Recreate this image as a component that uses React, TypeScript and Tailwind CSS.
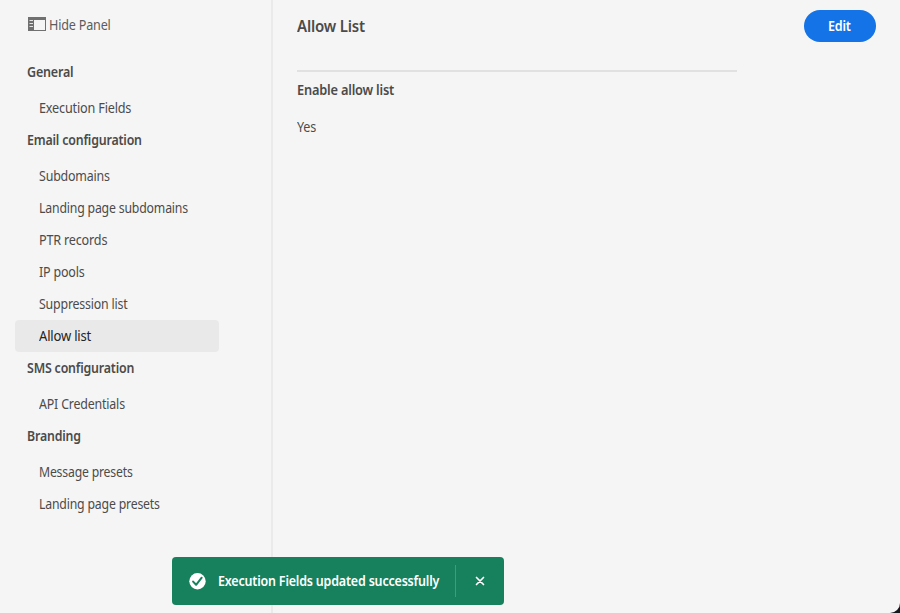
import React from 'react';

type Item = { label: string; fit: string; active?: boolean };
type Section = { title: string; fit: string; items: Item[] };

const sections: Section[] = [
  {
    title: 'General',
    fit: 'scale-x-[0.927]',
    items: [{ label: 'Execution Fields', fit: 'scale-x-[0.938]' }],
  },
  {
    title: 'Email configuration',
    fit: 'scale-x-[0.918]',
    items: [
      { label: 'Subdomains', fit: 'scale-x-[0.92]' },
      { label: 'Landing page subdomains', fit: 'scale-x-[0.91]' },
      { label: 'PTR records', fit: 'scale-x-[0.935]' },
      { label: 'IP pools', fit: 'scale-x-[0.925]' },
      { label: 'Suppression list', fit: 'scale-x-[0.915]' },
      { label: 'Allow list', fit: 'scale-x-[0.965]', active: true },
    ],
  },
  {
    title: 'SMS configuration',
    fit: 'scale-x-[0.917]',
    items: [{ label: 'API Credentials', fit: 'scale-x-[0.919]' }],
  },
  {
    title: 'Branding',
    fit: 'scale-x-[0.915]',
    items: [
      { label: 'Message presets', fit: 'scale-x-[0.905]' },
      { label: 'Landing page presets', fit: 'scale-x-[0.909]' },
    ],
  },
];

function Label({ fit, children }: { fit: string; children: string }) {
  return <span className={`inline-block origin-left whitespace-nowrap tracking-[-0.2px] ${fit}`}>{children}</span>;
}

function PanelIcon() {
  return (
    <svg width="18" height="14" viewBox="0 0 18 14" className="shrink-0" fill="none">
      <path fill="#707070" fillRule="evenodd" d="M0 0h18v14H0zM6 3v10h11V3z" />
      <path stroke="#e4e4e4" d="M1.5 3.5h3.5M1.5 6.5h3.5M1.5 9.5h3.5" />
    </svg>
  );
}

function Sidebar() {
  return (
    <aside className="h-full w-[273px] shrink-0 border-r-2 border-[#eaeaea] pl-[15px] pt-2">
      <button className="ml-[13px] flex h-8 items-center gap-[3px] text-[#5c5c5c]">
        <PanelIcon />
        <span className="pt-px">
          <Label fit="scale-x-[0.933]">Hide Panel</Label>
        </span>
      </button>
      <nav className="w-[204px] pt-4">
        {sections.map((section) => (
          <section key={section.title}>
            <h2 className="flex h-9 items-center pb-1 pl-3 font-semibold">
              <Label fit={section.fit}>{section.title}</Label>
            </h2>
            <ul>
              {section.items.map((item) => (
                <li
                  key={item.label}
                  className={`flex h-8 items-center rounded pl-6 ${item.active ? 'bg-[#e9e9e9] text-[#242424]' : ''}`}
                >
                  <Label fit={item.fit}>{item.label}</Label>
                </li>
              ))}
            </ul>
          </section>
        ))}
      </nav>
    </aside>
  );
}

function Toast() {
  return (
    <div className="absolute left-[172px] top-[557px] flex h-12 w-[332px] items-center rounded bg-[#17805c] pl-[17px] text-white">
      <svg width="17" height="17" viewBox="0 0 17 17" className="shrink-0" fill="none">
        <circle cx="8.5" cy="8.3" r="8.2" fill="white" />
        <path d="M4.1 8.6l3 3.2 5.6-7.1" stroke="#17805c" strokeWidth="2" strokeLinecap="round" strokeLinejoin="round" />
      </svg>
      <span className="ml-3 w-[237px] font-semibold">
        <Label fit="scale-x-[0.924]">Execution Fields updated successfully</Label>
      </span>
      <span className="h-8 w-px bg-[#459979]" />
      <button aria-label="Close" className="flex flex-1 items-center justify-center">
        <svg width="10" height="10" viewBox="0 0 10 10" stroke="white" strokeWidth="1.7" strokeLinecap="round">
          <path d="M1.5 1.5l7 7M8.5 1.5l-7 7" />
        </svg>
      </button>
    </div>
  );
}

export default function App() {
  return (
    <div className="relative h-[613px] w-[900px] overflow-hidden bg-[#15151c] font-['Noto_Sans',sans-serif] text-[13.5px] leading-5 text-[#4b4b4b]">
      <div className="flex h-full rounded-br-[10px] bg-[#f5f5f5]">
        <Sidebar />
        <main className="flex-1 px-6 pt-[10px]">
          <header className="flex h-8 items-center justify-between">
            <h1 className="text-[15.5px] font-semibold">
              <Label fit="scale-x-[0.968]">Allow List</Label>
            </h1>
            <button className="h-8 w-[72px] rounded-full bg-[#1473e6] pl-[1px] font-semibold text-white">
              <Label fit="scale-x-[0.93]">Edit</Label>
            </button>
          </header>
          <hr className="mt-[28px] w-[440px] border-t-2 border-[#e1e1e1]" />
          <h2 className="mt-2 font-semibold">
            <Label fit="scale-x-[0.948]">Enable allow list</Label>
          </h2>
          <p className="mt-[17px]">
            <Label fit="scale-x-[0.93]">Yes</Label>
          </p>
        </main>
      </div>
      <Toast />
    </div>
  );
}
